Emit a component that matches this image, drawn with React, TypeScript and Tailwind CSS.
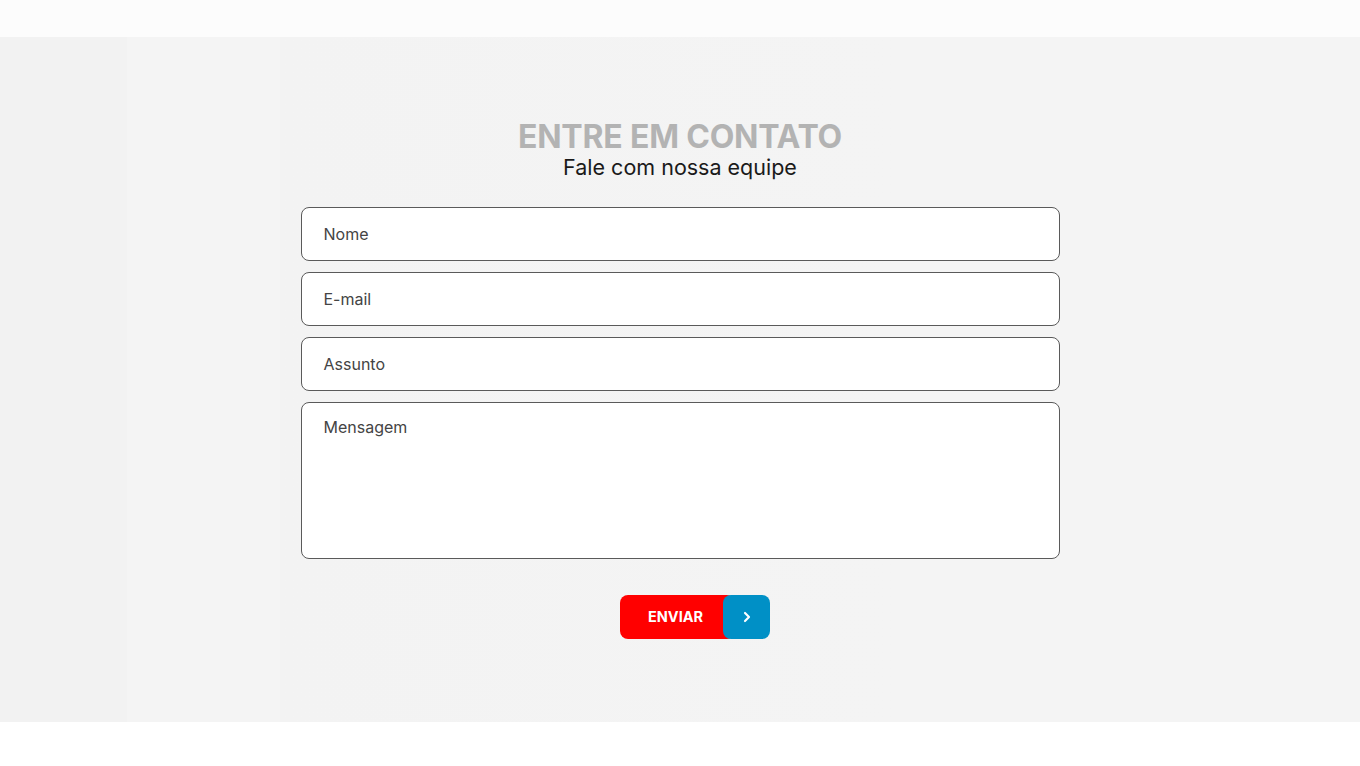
import React from "react";
import { ChevronRight } from "lucide-react";

const font = { fontFamily: "Inter, 'Noto Sans', sans-serif" };

export default function App() {
  return (
    <div className="w-[1360px] h-[766px] bg-white flex flex-col" style={font}>
      <div className="h-[37px] bg-[#fcfcfc]" />
      <section className="h-[685px] bg-[#f4f4f4] bg-[linear-gradient(90deg,#f2f2f2_0px,#f2f2f2_127px,#f4f4f4_127px,#f4f4f4_280px,#f3f3f3_280px,#f4f4f4_900px,#f4f4f4_100%)] flex flex-col items-center">
        <h2 className="mt-[82px] text-[32px] leading-[36px] font-bold text-[#b3b3b3] tracking-[-0.2px]">
          ENTRE EM CONTATO
        </h2>
        <p className="text-[21.5px] leading-[26px] text-[#1a1a1a] -mt-[1px]">Fale com nossa equipe</p>
        <form className="mt-[27px] w-[759px] flex flex-col gap-[11px]">
          {["Nome", "E-mail", "Assunto"].map((p) => (
            <div
              key={p}
              className="h-[54px] bg-white border border-[#5a5a5a] rounded-[8px] flex items-center px-[22px] text-[16px] text-[#444]"
            >
              {p}
            </div>
          ))}
          <div className="h-[157px] bg-white border border-[#5a5a5a] rounded-[8px] px-[22px] pt-[12px] text-[16px] text-[#444]">
            Mensagem
          </div>
        </form>
        <div className="mt-[36px] ml-[30px] flex">
          <div className="w-[115px] h-[44px] bg-[#ff0000] rounded-[8px] flex items-center pl-[28px] text-white text-[14.5px] font-bold">
            ENVIAR
          </div>
          <div className="w-[47px] h-[44px] bg-[#0090c6] rounded-[8px] -ml-[12px] flex items-center justify-center text-white">
            <ChevronRight size={16} strokeWidth={3.2} />
          </div>
        </div>
      </section>
      <div className="flex-1 bg-white" />
    </div>
  );
}
